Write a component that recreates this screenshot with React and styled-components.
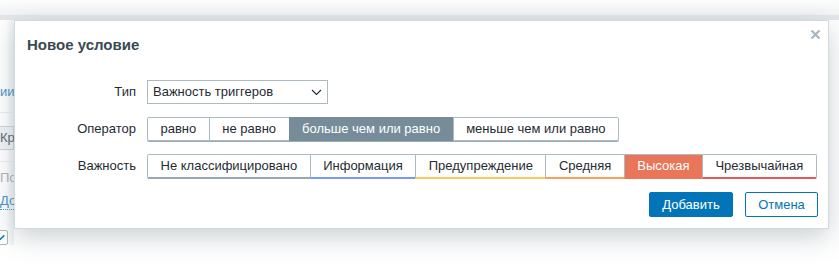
import React from 'react';
import styled, { createGlobalStyle } from 'styled-components';

const GlobalStyle = createGlobalStyle`
    html, body {
        margin: 0;
        padding: 0;
        background: #fff;
    }
    body {
        font-family: "Liberation Sans", Arial, sans-serif;
        font-size: 13px;
        color: #1f2c33;
    }
`;

const severities = [
    { name: 'Не классифицировано', color: '#97aab3' },
    { name: 'Информация', color: '#7499ff' },
    { name: 'Предупреждение', color: '#ffc859' },
    { name: 'Средняя', color: '#ffa059' },
    { name: 'Высокая', color: '#e97659', active: true },
    { name: 'Чрезвычайная', color: '#e45959' },
];

const operators = [
    { name: 'равно' },
    { name: 'не равно' },
    { name: 'больше чем или равно', active: true },
    { name: 'меньше чем или равно' },
];

function App() {
    return (
        <Page>
            <GlobalStyle />
            <Header />
            <Backdrop>
                <BgTail>ии</BgTail>
                <BgInput>Кр</BgInput>
                <BgMuted>По</BgMuted>
                <BgLink>До</BgLink>
                <BgCheck>
                    <svg width="9" height="9" viewBox="0 0 9 9">
                        <path d="M1 7 L6 2" stroke="#0275b8" strokeWidth="1.6" />
                    </svg>
                </BgCheck>
            </Backdrop>

            <Dialog>
                <Close>
                    <svg width="11" height="11" viewBox="0 0 11 11">
                        <path d="M1.5 1.5 L9.5 9.5 M9.5 1.5 L1.5 9.5" stroke="#a8b5bd" strokeWidth="2.2" />
                    </svg>
                </Close>
                <Title>Новое условие</Title>

                <Form>
                    <Label>Тип</Label>
                    <Select>
                        <span>Важность триггеров</span>
                        <svg width="11" height="7" viewBox="0 0 11 7">
                            <path d="M1 1 L5.5 5.5 L10 1" fill="none" stroke="#1f2c33" strokeWidth="1.1" />
                        </svg>
                    </Select>

                    <Label>Оператор</Label>
                    <Segments $shadow>
                        {operators.map((op) => (
                            <Segment key={op.name} $active={op.active}>{op.name}</Segment>
                        ))}
                    </Segments>

                    <Label>Важность</Label>
                    <Segments>
                        {severities.map((s) => (
                            <Severity key={s.name} $color={s.color} $active={s.active}>{s.name}</Severity>
                        ))}
                    </Segments>
                </Form>

                <Footer>
                    <PrimaryButton>Добавить</PrimaryButton>
                    <SecondaryButton>Отмена</SecondaryButton>
                </Footer>
            </Dialog>
        </Page>
    );
}

export default App;

const Page = styled.div`
    position: relative;
    width: 839px;
    height: 268px;
    overflow: hidden;
    background: #fff;
`;

const Header = styled.div`
    height: 15px;
    background: linear-gradient(#fdfdfd, #f1f3f4);
    border-bottom: 5px solid #e3e7ea;
`;

const Backdrop = styled.div`
    display: flex;
    flex-direction: column;
    width: 14px;
    padding-top: 62px;
    background: linear-gradient(90deg, #fff 40%, #eef1f3);
`;

const BgTail = styled.div`
    white-space: nowrap;
    text-align: right;
    color: #4796c4;
    line-height: 20px;
    font-size: 13px;
    padding-bottom: 10px;
    padding-right: 2px;
    border-bottom: 1px solid #ebeef0;
`;

const BgInput = styled.div`
    margin-top: 13px;
    height: 22px;
    line-height: 22px;
    white-space: nowrap;
    border: 1px solid #cdd5d9;
    border-left: none;
    background: #f0f3f5;
    font-size: 13px;
    color: #5c6a72;
`;

const BgMuted = styled.div`
    margin-top: 11px;
    padding-top: 7px;
    border-top: 1px solid #ebeef0;
    white-space: nowrap;
    color: #aab5bb;
    font-size: 13px;
    line-height: 18px;
`;

const BgLink = styled.span`
    margin-top: 6px;
    white-space: nowrap;
    color: #4796c4;
    font-size: 13px;
    line-height: 16px;
    border-bottom: 1px dotted #4796c4;
    align-self: flex-start;
`;

const BgCheck = styled.div`
    margin-top: 20px;
    margin-left: -7px;
    width: 13px;
    height: 13px;
    border: 1px solid #acbbc2;
    border-radius: 2px;
    display: flex;
    align-items: center;
    justify-content: center;
    svg {
        margin-left: 5px;
    }
`;

const Dialog = styled.div`
    position: absolute;
    left: 14px;
    top: 20px;
    width: 815px;
    height: 209px;
    background: #fff;
    border: 1px solid #d3dade;
    box-shadow: 0 8px 24px rgba(70, 90, 100, 0.28);
    padding: 0 10px 0 12px;
    box-sizing: border-box;
`;

const Close = styled.div`
    position: absolute;
    top: 8px;
    right: 7px;
    width: 11px;
    height: 11px;
    display: flex;
`;

const Title = styled.h4`
    margin: 0;
    padding-top: 15px;
    font-size: 15px;
    line-height: 18px;
    font-weight: bold;
    color: #3a4a53;
`;

const Form = styled.div`
    display: grid;
    grid-template-columns: 109px max-content;
    column-gap: 11px;
    row-gap: 13px;
    align-items: start;
    justify-items: start;
    margin-top: 26px;
`;

const Label = styled.div`
    justify-self: end;
    text-align: right;
    line-height: 24px;
    font-size: 13px;
    color: #1f2c33;
`;

const Select = styled.div`
    width: 181px;
    height: 24px;
    box-sizing: border-box;
    border: 1px solid #acbbc2;
    display: flex;
    align-items: center;
    justify-content: space-between;
    padding: 0 4px 0 5px;
    font-size: 13px;
    span {
        line-height: 22px;
    }
    svg {
        margin-right: 1px;
    }
`;

const Segments = styled.div`
    display: flex;
    border-radius: 2px;
    box-shadow: ${(p) => (p.$shadow ? '0 1px 0 #98aab3' : 'none')};
`;

const Segment = styled.div`
    height: 24px;
    box-sizing: border-box;
    line-height: 22px;
    padding: 0 12.5px;
    font-size: 13px;
    white-space: nowrap;
    border: 1px solid ${(p) => (p.$active ? '#768d99' : '#acbbc2')};
    margin-left: -1px;
    background: ${(p) => (p.$active ? '#768d99' : '#fff')};
    color: ${(p) => (p.$active ? '#fff' : '#1f2c33')};
    &:first-child {
        margin-left: 0;
        border-radius: 2px 0 0 2px;
    }
    &:last-child {
        border-radius: 0 2px 2px 0;
    }
`;

const Severity = styled(Segment)`
    height: 25px;
    background: ${(p) => (p.$active ? p.$color : '#fff')};
    border-color: #acbbc2;
    border-bottom: 2px solid ${(p) => p.$color};
    line-height: 22px;
`;

const Footer = styled.div`
    display: flex;
    justify-content: flex-end;
    gap: 12px;
    margin-top: 13px;
`;

const PrimaryButton = styled.button`
    height: 25px;
    padding: 0 11px;
    min-width: 84px;
    border: 1px solid #0275b8;
    border-radius: 2px;
    background: #0275b8;
    color: #fff;
    font-family: "Liberation Sans", Arial, sans-serif;
    font-size: 13px;
`;

const SecondaryButton = styled(PrimaryButton)`
    min-width: 73px;
    background: #fff;
    color: #0275b8;
`;
